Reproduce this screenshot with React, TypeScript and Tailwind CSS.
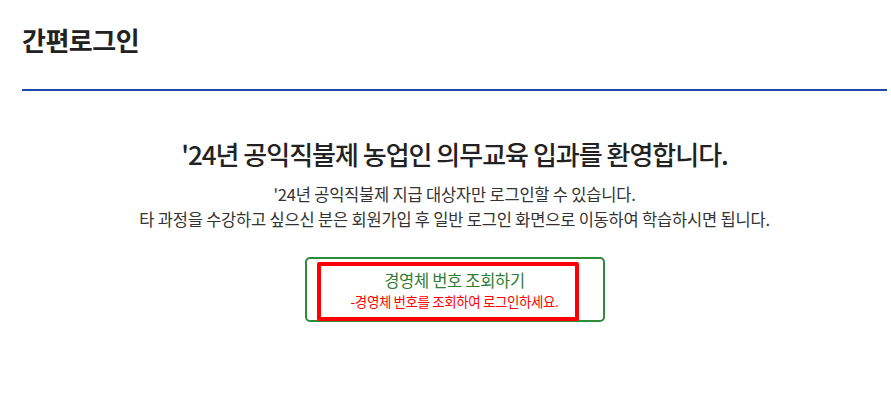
import React from "react";

export default function App() {
  return (
    <div
      className="w-[891px] h-[408px] bg-white text-[#222]"
      style={{ fontFamily: '"Noto Sans CJK KR", "Noto Sans", sans-serif' }}
    >
      <div className="ml-[22px] mr-[4px]">
        <div className="pt-[21px] h-[91px] border-b-2 border-[#1e48a8]">
          <h1 className="text-[26px] leading-[38px] font-bold tracking-[-0.5px] text-[#222]">간편로그인</h1>
        </div>
        <div className="flex flex-col items-center pt-[44px]">
          <h2 className="text-[26px] leading-[38px] font-medium tracking-[-1px] text-[#222]">'24년 공익직불제 농업인 의무교육 입과를 환영합니다.</h2>
          <p className="mt-[9px] text-[16.5px] leading-[25px] text-[#333] text-center tracking-[-0.2px]">
            '24년 공익직불제 지급 대상자만 로그인할 수 있습니다.
            <br />
            타 과정을 수강하고 싶으신 분은 회원가입 후 일반 로그인 화면으로 이동하여 학습하시면 됩니다.
          </p>
          <div className="relative mt-[25px] w-[300px] h-[65px] border-2 border-[#2e8b3a] rounded-[5px] flex flex-col items-center pt-[10px]">
            <span className="text-[16.5px] leading-[22px] text-[#2e7d32] tracking-[-0.3px]">경영체 번호 조회하기</span>
            <span className="text-[13.5px] leading-[20px] text-[#ff0000] tracking-[-0.4px]">-경영체 번호를 조회하여 로그인하세요.</span>
            <div className="absolute left-[10px] top-[3px] w-[262px] h-[59px] border-4 border-[#ff0000] rounded-[2px]" />
          </div>
        </div>
      </div>
    </div>
  );
}
